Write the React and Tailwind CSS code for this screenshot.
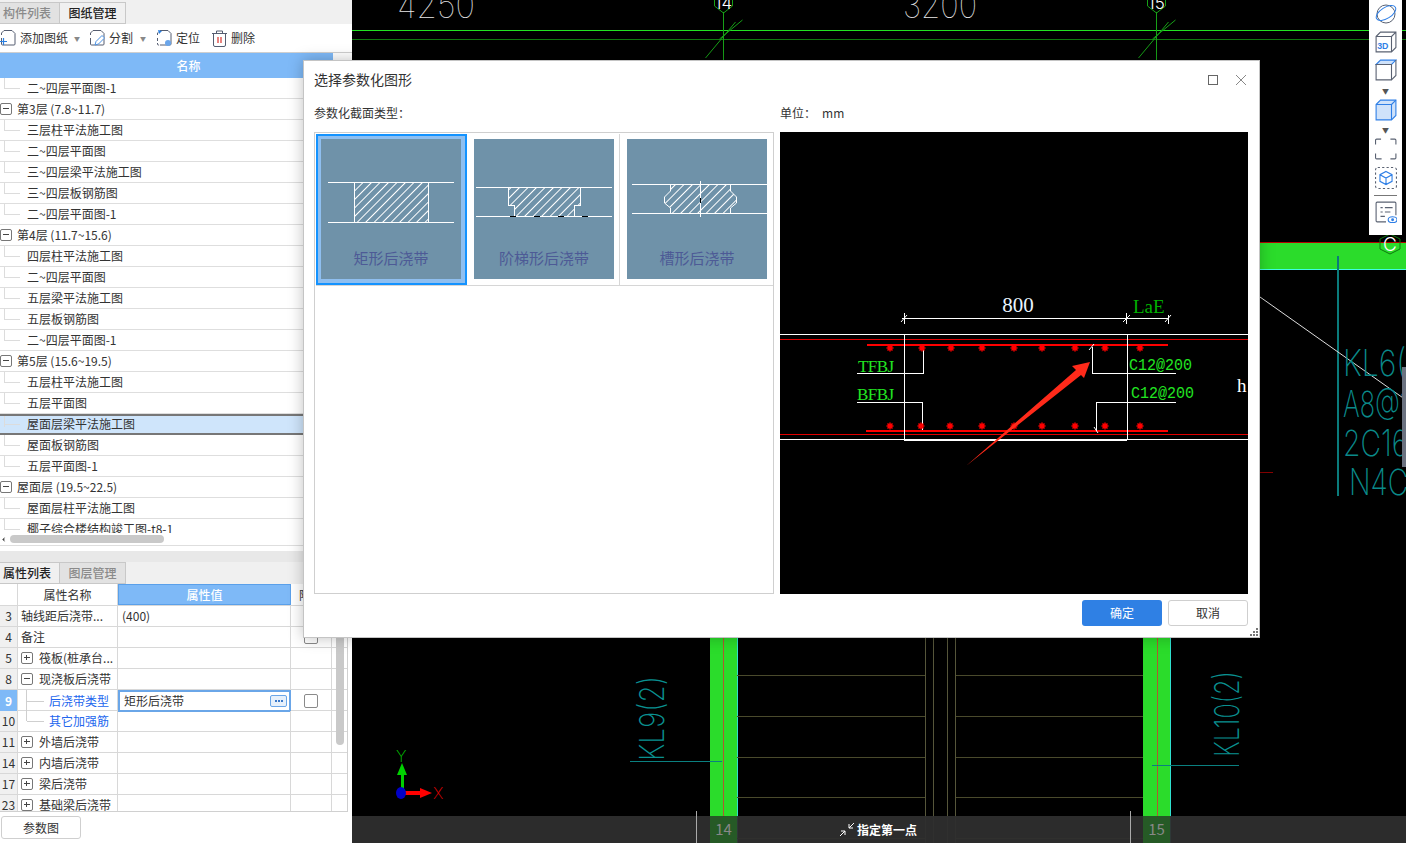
import { ChevronLeft } from "lucide-react";

const CJK = "font-['Noto_Sans_CJK_SC','Liberation_Sans',sans-serif]";

const treeRows = [
  { t: "二~四层平面图-1" },
  { t: "第3层 (7.8~11.7)", group: true },
  { t: "三层柱平法施工图" },
  { t: "二~四层平面图" },
  { t: "三~四层梁平法施工图" },
  { t: "三~四层板钢筋图" },
  { t: "二~四层平面图-1" },
  { t: "第4层 (11.7~15.6)", group: true },
  { t: "四层柱平法施工图" },
  { t: "二~四层平面图" },
  { t: "五层梁平法施工图" },
  { t: "五层板钢筋图" },
  { t: "二~四层平面图-1" },
  { t: "第5层 (15.6~19.5)", group: true },
  { t: "五层柱平法施工图" },
  { t: "五层平面图" },
  { t: "屋面层梁平法施工图", selected: true },
  { t: "屋面板钢筋图" },
  { t: "五层平面图-1" },
  { t: "屋面层 (19.5~22.5)", group: true },
  { t: "屋面层柱平法施工图" },
  { t: "椰子综合楼结构竣工图-t8-1" },
];

const propRows = [
  { n: "3", name: "轴线距后浇带...", value: "(400)" },
  { n: "4", name: "备注", check: true },
  { n: "5", name: "筏板(桩承台...", box: "+" },
  { n: "8", name: "现浇板后浇带", box: "-" },
  { n: "9", name: "后浇带类型", child: true, active: true, value: "矩形后浇带", check: true },
  { n: "10", name: "其它加强筋", child: true, last: true },
  { n: "11", name: "外墙后浇带", box: "+" },
  { n: "14", name: "内墙后浇带", box: "+" },
  { n: "17", name: "梁后浇带", box: "+" },
  { n: "23", name: "基础梁后浇带", box: "+" },
];

function PlusMinus({ sign }) {
  return (
    <span className="flex h-[12px] w-[12px] shrink-0 items-center justify-center rounded-[2px] border border-[#777] bg-white">
      <span className="relative block h-[8px] w-[8px]">
        <span className="absolute left-[1px] top-[3px] h-px w-[6px] bg-[#444]" />
        {sign === "+" && <span className="absolute left-[3px] top-[1px] h-[5px] w-px bg-[#444]" />}
      </span>
    </span>
  );
}

function ToolIcon({ kind }) {
  return (
    <svg width="16" height="18" viewBox="0 0 16 18" fill="none" className="shrink-0">
      <path d="M4 1.500H12L15 4.500V15A1 1 0 0 1 14 16H4" stroke="#555d70" />
      <path d="M1.500 6V4L4 1.500M1.500 9V15A1 1 0 0 0 2.500 16H4" stroke="#555d70" strokeDasharray={kind === "locate" ? "3 2" : "none"} />
      {kind === "add" && <path d="M0 12.500H7M3.500 9V16" stroke="#2b7fe0" strokeWidth="1.200" />}
      {kind === "split" && <path d="M6 16l1-3.500 6-6 2.500 2.500-6 6z" stroke="#4a90e2" fill="#fff" />}
      {kind === "locate" && <><path d="M2 1l4 1-3 3z" fill="#2b7fe0" /><circle cx="12" cy="14" r="3" fill="#6aa5ea" /></>}
    </svg>
  );
}

function TrashIcon() {
  return (
    <svg width="15" height="17" viewBox="0 0 15 17" fill="none" className="shrink-0">
      <path d="M0 3.500H15M4.500 3.500V1H10.500V3.500M1.500 3.500V15A1.500 1.500 0 0 0 3 16.500H12A1.500 1.500 0 0 0 13.500 15V3.500" stroke="#555d70" />
      <path d="M6 7V13M9 7V13" stroke="#d9322c" strokeWidth="1.200" />
    </svg>
  );
}

function TabPair({ left, right, leftActive }) {
  return (
    <div className="flex h-[22px] shrink-0 items-stretch bg-[#f0f0f0] text-[12px] font-medium">
      <div className={`flex w-[60px] items-center justify-center border border-l-0 border-[#c8c8c8] pr-[5px] ${leftActive ? "bg-[#f0f0f0] text-[#222]" : "bg-[#e2e2e2] text-[#8a8a8a]"}`}>{left}</div>
      <div className={`flex w-[66px] items-center justify-center border border-l-0 border-[#c8c8c8] ${leftActive ? "bg-[#e2e2e2] text-[#8a8a8a]" : "bg-[#f0f0f0] text-[#222]"}`}>{right}</div>
    </div>
  );
}

function TreeRow({ row }) {
  return (
    <div className={`relative flex h-[21px] w-[333px] shrink-0 items-center text-[12px] text-[#333] ${row.selected ? "border-y-2 border-y-[#777] bg-[#cfe5fb] pb-px" : "border-b border-[#dedede]"}`}>
      {row.group ? (
        <>
          <span className="mr-[5px]"><PlusMinus sign="-" /></span>
          <span>{row.t}</span>
        </>
      ) : (
        <>
          <span className="absolute left-[4px] top-0 h-[11px] w-px bg-[#dcdcdc]" />
          <span className="ml-[5px] mr-[7px] h-px w-[15px] bg-[#dcdcdc]" />
          <span className="whitespace-nowrap">{row.t}</span>
        </>
      )}
    </div>
  );
}

function LeftPanel() {
  return (
    <div className="flex h-full w-[352px] shrink-0 flex-col bg-white">
      <div className="h-[2px] shrink-0 bg-[#f0f0f0]" />
      <TabPair left="构件列表" right="图纸管理" />
      <div className="flex h-[29px] shrink-0 items-center border-b border-[#cfcfcf] text-[12px] text-[#333]">
        <span className="flex items-center gap-[4px]"><ToolIcon kind="add" />添加图纸<span className="ml-[2px] text-[6px] text-[#888]">▼</span></span>
        <span className="ml-[9px] flex items-center gap-[4px]"><ToolIcon kind="split" />分割<span className="ml-[3px] text-[6px] text-[#888]">▼</span></span>
        <span className="ml-[10px] flex items-center gap-[4px]"><ToolIcon kind="locate" />定位</span>
        <span className="ml-[12px] flex items-center gap-[4px]"><TrashIcon />删除</span>
      </div>
      <div className="flex h-[25px] w-[333px] shrink-0 items-center justify-center bg-[#7eb9f7] pl-[44px] text-[12px] font-medium text-white">名称</div>
      <div className="h-[455px] shrink-0 overflow-hidden">
        {treeRows.map((row, i) => <TreeRow key={i} row={row} />)}
      </div>
      <div className="flex h-[13px] shrink-0 items-center border-b border-[#dedede] bg-white">
        <ChevronLeft size={7} fill="#444" stroke="#444" />
        <div className="ml-[3px] h-[8px] w-[154px] rounded-full bg-[#c9c9c9]" />
      </div>
      <div className="h-[5px] shrink-0 bg-white" />
      <div className="h-[11px] shrink-0 bg-[#e8e8e8]" />
      <TabPair left="属性列表" right="图层管理" leftActive />
      <div className="relative h-[228px] w-[348px] shrink-0 overflow-hidden border-r border-b border-[#d0d0d0] bg-white">
        <div className="grid h-[22px] grid-cols-[18px_100px_173px_41px] border-b border-[#d8d8d8] text-[12px]">
          <div className="border-r border-[#d8d8d8]" />
          <div className="flex items-center justify-center border-r border-[#d8d8d8] text-[#333]">属性名称</div>
          <div className="flex items-center justify-center border border-[#5aa0ea] bg-[#7eb9f7] font-medium text-white">属性值</div>
          <div className="flex items-center border-r border-[#d8d8d8] pl-[8px] text-[#333]">附</div>
        </div>
        {propRows.map((r) => (
          <div key={r.n} className="grid h-[21px] grid-cols-[18px_100px_173px_41px] border-b border-[#d8d8d8] text-[12px] text-[#333]">
            <div className={`flex items-center justify-center border-r border-[#d8d8d8] ${r.active ? "bg-[#7eb9f7] font-bold text-white" : "bg-[#f0f0f0]"}`}>{r.n}</div>
            <div className="relative flex items-center overflow-hidden whitespace-nowrap border-r border-[#d8d8d8] pl-[3px]">
              {r.box && <span className="mr-[6px]"><PlusMinus sign={r.box} /></span>}
              {r.child && (
                <>
                  <span className={`absolute left-[8px] top-0 w-px bg-[#cfcfcf] ${r.last ? "h-[10px]" : "h-[21px]"}`} />
                  <span className="ml-[6px] mr-[5px] h-px w-[17px] bg-[#cfcfcf]" />
                </>
              )}
              <span className={r.child ? "text-[#2266ee]" : ""}>{r.name}</span>
            </div>
            {r.active ? (
              <div className="flex items-center justify-between border-2 border-[#6aa6e8] pl-[4px] pr-[2px]">
                <span>{r.value}</span>
                <span className="flex h-[12px] w-[17px] items-center justify-center gap-px rounded-[2px] border border-[#6aa6e8] bg-[#e6f0fb]">
                  <span className="h-[2px] w-[2px] bg-[#3a78c8]" />
                  <span className="h-[2px] w-[2px] bg-[#3a78c8]" />
                  <span className="h-[2px] w-[2px] bg-[#3a78c8]" />
                </span>
              </div>
            ) : (
              <div className="flex items-center border-r border-[#d8d8d8] pl-[4px]">{r.value}</div>
            )}
            <div className="flex items-center justify-center border-r border-[#d8d8d8]">
              {r.check && <span className="h-[14px] w-[14px] rounded-[2px] border border-[#8a8a8a] bg-white" />}
            </div>
          </div>
        ))}
        <div className="absolute right-[3px] top-[38px] h-[123px] w-[8px] rounded-full bg-[#c9c9c9]" />
      </div>
      <div className="mt-[4px] flex">
        <button className="ml-[1px] h-[23px] w-[80px] rounded-[3px] border border-[#cfcfcf] bg-white text-[12px] text-[#333]">参数图</button>
      </div>
    </div>
  );
}

function CadCanvas() {
  const ticks = [675, 716, 757, 797, 838];
  return (
    <svg className="block" width="1054" height="843" viewBox="352 0 1054 843" fill="none" shapeRendering="crispEdges">
      <rect x="352" y="0" width="1054" height="843" fill="#000" />
      <path d="M352 30.500H1406" stroke="#22e322" />
      <path d="M352 39.500H1406" stroke="#0f7a0f" />
      <text x="397" y="18" fill="#e8e8e8" fontFamily="Inter" fontSize="36" textLength="78" lengthAdjust="spacingAndGlyphs" fontWeight="100">4250</text>
      <text x="903" y="18" fill="#e8e8e8" fontFamily="Inter" fontSize="36" textLength="74" lengthAdjust="spacingAndGlyphs" fontWeight="100">3200</text>
      {[723.500, 1156.500].map((x, i) => (
        <g key={x}>
          <path d={`M${x} 12V62`} stroke="#17a017" />
          <path d={`M${x - 18} 58L${x + 12} 22M${x - 4} 39L${x + 19} 20`} stroke="#17a017" shapeRendering="auto" />
          <path d={`M${x - 9} 0V6L${x} 13L${x + 9} 6V0`} stroke="#17a017" shapeRendering="auto" />
          <text x={x} y="9" textAnchor="middle" fill="#fff" fontFamily="Inter" fontWeight="300" fontSize="17">{i === 0 ? "14" : "15"}</text>
        </g>
      ))}
      {/* green band at the right */}
      <rect x="1260" y="243" width="146" height="26" fill="#2bdc2b" />
      <path d="M1260 242.500H1406" stroke="#b80000" />
      <path d="M1260 269.500H1406" stroke="#40ffe0" />
      <path d="M1390 234l10 5v10l-10 5-10-5v-10z" stroke="#0f7a0f" shapeRendering="auto" />
      <text x="1390" y="251" textAnchor="middle" fill="#fff" fontFamily="Inter" fontWeight="300" fontSize="19">C</text>
      <path d="M1338 256V496" stroke="#0a7b7b" strokeWidth="2" />
      <path d="M1260 297L1406 400" stroke="#ddd" shapeRendering="auto" />
      <g fill="#0a8a8a" fontFamily="Inter" fontWeight="200" fontSize="36">
        <text x="1343" y="376" textLength="82" lengthAdjust="spacingAndGlyphs">KL6(2</text>
        <text x="1343" y="417" textLength="82" lengthAdjust="spacingAndGlyphs">A8@10</text>
        <text x="1343" y="456" textLength="72" lengthAdjust="spacingAndGlyphs">2C16,</text>
        <text x="1349" y="495" textLength="70" lengthAdjust="spacingAndGlyphs">N4C1</text>
      </g>
      <path d="M1260 472.500H1273" stroke="#8a0000" />
      <rect x="1402" y="367" width="4" height="100" fill="#6b7280" />
      {/* columns at the bottom */}
      <rect x="710" y="638" width="27" height="205" fill="#2bdc2b" />
      <rect x="1143" y="638" width="27" height="205" fill="#2bdc2b" />
      <path d="M737.500 638V843M1170.500 638V843" stroke="#30e0d0" />
      <path d="M723.500 638V843M1157.500 638V843" stroke="#b05a30" />
      <path d="M925.500 638V843M933.500 638V843M947.500 638V843M955.500 638V843" stroke="#56563a" />
      {ticks.map((y) => (
        <path key={y} d={`M737 ${y + 0.5}H925M956 ${y + 0.5}H1143`} stroke="#4a4a2c" />
      ))}
      <path d="M630 761.500H722M1152 765.500H1239" stroke="#0a8080" />
      <text transform="translate(664 761) rotate(-90)" fill="#0a9090" fontFamily="Inter" fontWeight="200" fontSize="34" textLength="85" lengthAdjust="spacingAndGlyphs">KL9(2)</text>
      <text transform="translate(1239 757) rotate(-90)" fill="#0a9090" fontFamily="Inter" fontWeight="200" fontSize="34" textLength="86" lengthAdjust="spacingAndGlyphs">KL10(2)</text>
      {/* axis marker */}
      <path d="M402 793V770" stroke="#00d000" strokeWidth="3" />
      <path d="M402 763l5 12h-10z" fill="#00d000" shapeRendering="auto" />
      <path d="M402 793H422" stroke="#f00" strokeWidth="4" />
      <path d="M432 793l-12-5v10z" fill="#f00" shapeRendering="auto" />
      <ellipse cx="401" cy="793" rx="5" ry="6" fill="#0000c8" shapeRendering="auto" />
      <text x="396" y="762" fill="#00d000" fontFamily="Inter" fontWeight="200" fontSize="16">Y</text>
      <text x="433" y="799" fill="#e00000" fontFamily="Inter" fontWeight="200" fontSize="16">X</text>
    </svg>
  );
}

function StatusBar() {
  return (
    <div className="absolute bottom-0 left-0 right-0 flex h-[27px] items-center justify-center bg-[#2e2e2e]/95 text-[12px] font-bold text-white">
      <div className="absolute left-[344px] top-[-5px] h-[32px] w-px bg-[#aaa]" />
      <div className="absolute left-[778px] top-[-5px] h-[32px] w-px bg-[#aaa]" />
      <div className="absolute left-[358px] top-0 flex h-[27px] w-[27px] items-center justify-center bg-[#265a26] text-[15px] font-normal text-[#888]">14</div>
      <div className="absolute left-[791px] top-0 flex h-[27px] w-[27px] items-center justify-center bg-[#265a26] text-[15px] font-normal text-[#888]">15</div>
      <div className="ml-[-2px] flex items-center gap-[2px]">
        <svg width="16" height="15" viewBox="0 0 16 15" fill="none" stroke="#fff">
          <path d="M1 14L6 9M6 13V9H2M15 1L10 6M10 2V6H14" />
        </svg>
        <span>指定第一点</span>
      </div>
    </div>
  );
}

function RightToolbar() {
  const gray = "#5a6272";
  const blue = "#2f7fe6";
  return (
    <div className="absolute right-[4px] top-0 flex h-[235px] w-[33px] flex-col items-center bg-white pt-[3px]">
      <svg width="22" height="21" viewBox="0 0 22 21" fill="none">
        <circle cx="11" cy="11" r="9" stroke={gray} />
        <ellipse cx="11" cy="10" rx="11" ry="5.500" transform="rotate(-32 11 10)" stroke={blue} />
      </svg>
      <svg width="22" height="22" viewBox="1 1 20 20" fill="none" className="mt-[7px]">
        <path d="M2 6L6 2H20V16L16 20H2ZM2 6H16V20M16 6L20 2" stroke={gray} />
        <text x="3" y="17" fill={blue} fontSize="8" fontWeight="700" fontFamily="Liberation Sans">3D</text>
      </svg>
      <svg width="22" height="22" viewBox="1 1 20 20" fill="none" className="mt-[6px]">
        <path d="M2 6L6 2H20L16 6Z" fill="#cfe2fa" stroke={blue} />
        <path d="M2 6H16V20H2ZM16 20L20 16V2" stroke={gray} />
      </svg>
      <span className="mt-[5px] text-[7px] leading-[10px] text-[#555]">▼</span>
      <svg width="22" height="22" viewBox="1 1 20 20" fill="none" className="mt-[3px]">
        <path d="M2 6L6 2H20V16L16 20H2Z" fill="#cfe2fa" stroke={blue} />
        <path d="M2 6H16V20M16 6L20 2" stroke={blue} />
      </svg>
      <span className="mt-[4px] text-[7px] leading-[10px] text-[#555]">▼</span>
      <svg width="22" height="22" viewBox="1 1 20 20" fill="none" className="mt-[3px]">
        <path d="M1.500 7V3a1 1 0 0 1 1-1h4M15 2h4a1 1 0 0 1 1 1v4M20 15v4a1 1 0 0 1-1 1h-4M7 20H2.500a1 1 0 0 1-1-1v-4" stroke={gray} />
      </svg>
      <svg width="22" height="22" viewBox="1 1 20 20" fill="none" className="mt-[7px]">
        <rect x="1.500" y="1.500" width="19" height="19" rx="2" stroke={gray} strokeDasharray="2 2" />
        <path d="M11 5l5.500 3v6L11 17l-5.500-3V8zM5.500 8L11 11l5.500-3M11 11v6" stroke={blue} />
      </svg>
      <div className="mt-[6px] h-px w-[23px] bg-[#777]" />
      <svg width="22" height="22" viewBox="1 1 20 20" fill="none" className="mt-[5px]">
        <path d="M11 20H3a1 1 0 0 1-1-1V3a1 1 0 0 1 1-1h16a1 1 0 0 1 1 1v11" stroke={gray} />
        <path d="M6 7h2M10 7h7M6 11h2M10 11h5M6 15h4" stroke={gray} />
        <ellipse cx="17" cy="18" rx="4" ry="2.700" stroke={blue} />
        <circle cx="17" cy="18" r="1.300" fill={blue} />
      </svg>
    </div>
  );
}

function CardDrawing({ kind }) {
  const id = `h-${kind}`;
  return (
    <svg width="140" height="140" viewBox="0 0 140 140" fill="none" className="absolute left-0 top-0" shapeRendering="crispEdges">
      <defs>
        <pattern id={id} width="6" height="6" patternUnits="userSpaceOnUse" patternTransform="rotate(45)">
          <rect width="1" height="6" fill="#fff" />
        </pattern>
      </defs>
      {kind === "rect" && (
        <g stroke="#fff">
          <rect x="33.500" y="43.500" width="74" height="40" fill={`url(#${id})`} />
          <path d="M7 43.500H133M7 83.500H133" />
        </g>
      )}
      {kind === "step" && (
        <g stroke="#fff">
          <path d="M34.500 48.500H106.500V66.500H100.500V77.500H40.500V66.500H34.500Z" fill={`url(#${id})`} />
          <path d="M2 48.500H138M2 77.500H138" />
          <path d="M36 77.500H42M60 77.500H66M84 77.500H90M108 77.500H114" stroke="#000" />
        </g>
      )}
      {kind === "groove" && (
        <g stroke="#fff">
          <path d="M43.500 45.500H103.500V52L109.500 58V64L103.500 69V74.500H43.500V69L37.500 64V58L43.500 52Z" fill={`url(#${id})`} shapeRendering="auto" />
          <path d="M5 45.500H140M5 74.500H140M73.500 42V78" />
          <path d="M73.500 59V64" stroke="#000" />
        </g>
      )}
    </svg>
  );
}

function ShapeCard({ kind, label, selected, className }) {
  const tile = (
    <div className="relative h-[140px] w-[140px] shrink-0 bg-[#6f92a9]">
      <CardDrawing kind={kind} />
      <span className="absolute inset-x-0 bottom-[11px] text-center text-[15px] leading-[20px] text-[#4d5a96]">{label}</span>
    </div>
  );
  if (selected) {
    return (
      <div className="h-[151px] w-[151px] shrink-0 border-2 border-[#1493ff]">
        <div className="h-full w-full bg-[#8fbff0] pl-[3px] pt-[3px]">{tile}</div>
      </div>
    );
  }
  return <div className={`flex h-[151px] shrink-0 items-start pt-[5px] ${className}`}>{tile}</div>;
}

function PreviewDrawing() {
  const topDots = [890, 922, 951, 982, 1014, 1042, 1075, 1105, 1140];
  const botDots = [890, 921, 950, 982, 1014, 1042, 1075, 1105, 1140];
  const star = (x, y) => `M${x - 3.5} ${y}h7M${x} ${y - 3.5}v7M${x - 2.500} ${y - 2.500}l5 5M${x - 2.500} ${y + 2.500}l5-5`;
  return (
    <svg width="468" height="462" viewBox="780 132 468 462" fill="none" className="absolute inset-0" shapeRendering="crispEdges">
      <path d="M780 334.500H1248M780 439.500H1248" stroke="#fff" />
      <path d="M780 339.500H1248M780 434.500H1248" stroke="#e00000" />
      <path d="M867 345H1168" stroke="#ff0000" strokeWidth="2" />
      <path d="M866 431H1168" stroke="#ff0000" strokeWidth="2" />
      <path d="M904.500 334V440.500H1126.500M1127.500 334V440" stroke="#fff" />
      <path d="M902 318.500H1126M1127 318.500H1169" stroke="#fff" />
      <path d="M904.500 313V324M1126.500 313V324M1168.500 315V324" stroke="#fff" />
      <path d="M901 322L907 315M1123 322L1130 315M1165 322L1171 315" stroke="#fff" shapeRendering="auto" />
      <path d="M923.500 350V373.500H857M857 402.500H922.500V430" stroke="#fff" />
      <path d="M1092.500 347V373.500H1176M1176 402.500H1096.500V431" stroke="#fff" />
      <path d="M1089 350L1094 344M1094 427L1098 433" stroke="#fff" shapeRendering="auto" />
      {topDots.map((x) => <path key={x} d={star(x, 348)} stroke="#ff0000" strokeWidth="1.500" shapeRendering="auto" />)}
      {botDots.map((x) => <path key={x} d={star(x, 426)} stroke="#ff0000" strokeWidth="1.500" shapeRendering="auto" />)}
      <text x="1018" y="312" textAnchor="middle" fill="#eaf4ff" fontFamily="Liberation Serif" fontSize="21">800</text>
      <text x="1133" y="313" fill="#00b000" fontFamily="Liberation Serif" fontSize="19">LaE</text>
      <g fill="#22e622" fontFamily="Liberation Serif" fontSize="17">
        <text x="858" y="372" textLength="36" lengthAdjust="spacing">TFBJ</text>
        <text x="857" y="400" textLength="37" lengthAdjust="spacing">BFBJ</text>
      </g>
      <g fill="#22e622" fontFamily="Liberation Mono" fontSize="17">
        <text x="1129" y="370" textLength="63" lengthAdjust="spacingAndGlyphs">C12@200</text>
        <text x="1131" y="398" textLength="63" lengthAdjust="spacingAndGlyphs">C12@200</text>
      </g>
      <text x="1237" y="392" fill="#fff" fontFamily="Liberation Serif" fontSize="19">h</text>
      <path d="M966 466L1076 370L1072 366L1090 362L1084 378L1081 375Z" fill="#ff2a1a" shapeRendering="auto" />
    </svg>
  );
}

function ParamDialog() {
  return (
    <div className="absolute left-[303px] top-[60px] z-10 flex h-[578px] w-[957px] flex-col border border-[#c4c4c4] bg-white text-[12px] text-[#333] shadow-[0_0_14px_rgba(0,0,0,0.25)]">
      <div className="flex h-[38px] shrink-0 items-center justify-between pb-px pl-[10px] pr-[13px] text-[14px]">
        <span>选择参数化图形</span>
        <div className="flex items-center gap-[18px]">
          <span className="h-[10px] w-[10px] border border-[#666]" />
          <svg width="10" height="10" viewBox="0 0 10 10" stroke="#888"><path d="M0 0L10 10M10 0L0 10" /></svg>
        </div>
      </div>
      <div className="flex h-[33px] shrink-0 items-center pb-[6px] pl-[10px]">
        <span className="w-[466px]">参数化截面类型：</span>
        <span>单位：</span>
        <span className="ml-[6px]">mm</span>
      </div>
      <div className="flex gap-[6px] pl-[10px]">
        <div className="h-[462px] w-[460px] border border-[#cfcfcf] pl-px pt-px">
          <div className="flex h-[152px] border-b border-[#d6d6d6]">
            <ShapeCard kind="rect" label="矩形后浇带" selected />
            <ShapeCard kind="step" label="阶梯形后浇带" className="w-[153px] border-r border-[#d6d6d6] pl-[7px]" />
            <ShapeCard kind="groove" label="槽形后浇带" className="w-[153px] pl-[7px]" />
          </div>
        </div>
        <div className="relative h-[462px] w-[468px] overflow-hidden bg-black">
          <PreviewDrawing />
        </div>
      </div>
      <div className="mt-[6px] flex justify-end gap-[6px] pr-[11px]">
        <button className="h-[26px] w-[80px] rounded-[3px] bg-[#2f80e4] text-[12px] text-white">确定</button>
        <button className="h-[26px] w-[80px] rounded-[3px] border border-[#cfcfcf] bg-white text-[12px] text-[#333]">取消</button>
      </div>
      <svg width="8" height="8" viewBox="0 0 8 8" className="absolute bottom-[1px] right-[1px]" fill="#777">
        <rect x="6" y="0" width="2" height="2" /><rect x="3" y="3" width="2" height="2" /><rect x="6" y="3" width="2" height="2" />
        <rect x="0" y="6" width="2" height="2" /><rect x="3" y="6" width="2" height="2" /><rect x="6" y="6" width="2" height="2" />
      </svg>
    </div>
  );
}

export default function App() {
  return (
    <div className={`relative flex h-[843px] w-[1406px] overflow-hidden bg-black ${CJK}`}>
      <LeftPanel />
      <div className="relative flex-1">
        <CadCanvas />
        <StatusBar />
        <RightToolbar />
      </div>
      <ParamDialog />
    </div>
  );
}
